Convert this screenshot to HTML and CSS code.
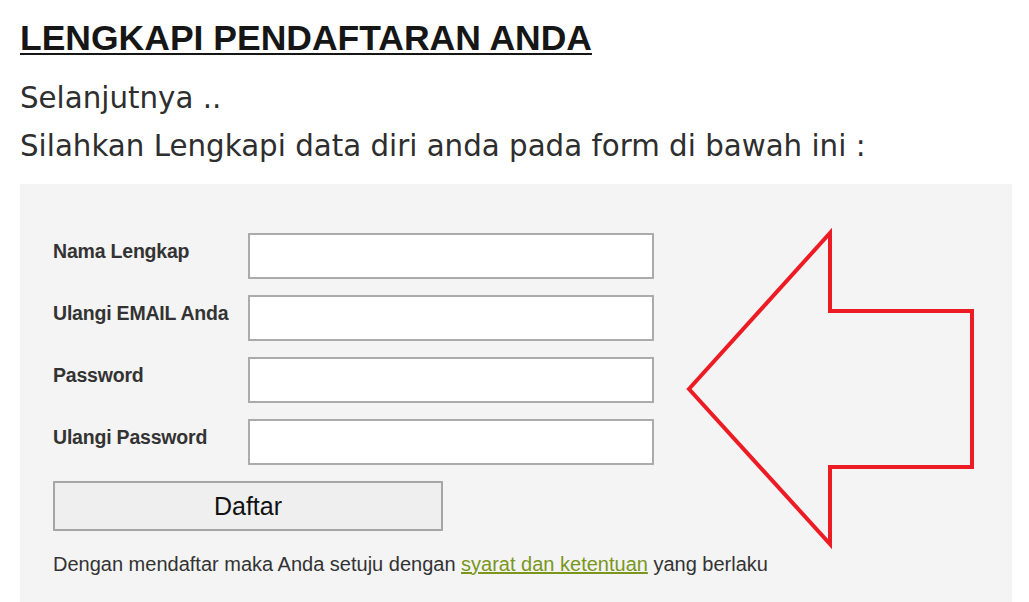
FILE: index.html
```html
<!DOCTYPE html>
<html lang="id">
<head>
<meta charset="utf-8">
<title>Lengkapi Pendaftaran Anda</title>
<link rel="stylesheet" href="styles.css">
</head>
<body>
<div class="page">
  <h1 class="title">LENGKAPI PENDAFTARAN ANDA</h1>
  <p class="lead">Selanjutnya ..</p>
  <p class="lead">Silahkan Lengkapi data diri anda pada form di bawah ini :</p>
  <div class="panel">
    <form class="form">
      <label class="label" for="nama">Nama Lengkap</label>
      <input class="field" id="nama" type="text">
      <label class="label" for="email">Ulangi EMAIL Anda</label>
      <input class="field" id="email" type="text">
      <label class="label" for="pass">Password</label>
      <input class="field" id="pass" type="password">
      <label class="label" for="pass2">Ulangi Password</label>
      <input class="field" id="pass2" type="password">
      <button class="submit" type="button">Daftar</button>
    </form>
    <p class="terms">Dengan mendaftar maka Anda setuju dengan <a class="terms-link" href="#">syarat dan ketentuan</a> yang berlaku</p>
    <svg class="arrow" width="300" height="330" viewBox="0 0 300 330" aria-hidden="true">
      <polygon points="150,8 150,86 292,86 292,242 150,242 150,319 9,164" fill="none" stroke="#ed1c24" stroke-width="4" stroke-linejoin="miter"/>
    </svg>
  </div>
</div>
</body>
</html>
```

FILE: styles.css
```css
html, body {
  margin: 0;
  padding: 0;
  background: #ffffff;
  height: 100%;
  overflow: hidden;
}

.page {
  padding: 18px 17px 0 20px;
}

.title {
  margin: 0 0 16px;
  font-family: "Liberation Sans", Arial, sans-serif;
  font-weight: bold;
  font-size: 35.5px;
  line-height: 40px;
  color: #161616;
  text-decoration: underline;
  text-decoration-thickness: 2px;
  text-underline-offset: 3px;
}

.lead {
  margin: 0;
  font-family: "DejaVu Sans", Verdana, sans-serif;
  font-size: 29.3px;
  line-height: 48px;
  color: #2e2e2e;
}

.panel {
  position: relative;
  margin-top: 14px;
  background: #f4f4f4;
  height: 440px;
  padding: 49px 0 0 33px;
  box-sizing: border-box;
}

.form {
  display: grid;
  grid-template-columns: 195px 406px;
  row-gap: 16px;
  margin: 0;
}

.label {
  padding-top: 7px;
  font-family: "Liberation Sans", Arial, sans-serif;
  font-weight: bold;
  font-size: 19.5px;
  line-height: 22px;
  letter-spacing: -0.2px;
  color: #333333;
}

.field {
  box-sizing: border-box;
  height: 46px;
  width: 406px;
  margin: 0;
  border: 2px solid #ababab;
  background: #ffffff;
  padding: 0 8px;
  font-size: 18px;
}

.submit {
  grid-column: 1 / 3;
  box-sizing: border-box;
  width: 390px;
  height: 50px;
  margin: 0;
  border: 2px solid #a6a6a6;
  background: #efefef;
  font-family: "Liberation Sans", Arial, sans-serif;
  font-size: 25px;
  color: #111111;
}

.terms {
  margin: 21px 0 0;
  font-family: "Liberation Sans", Arial, sans-serif;
  font-size: 20px;
  line-height: 24px;
  color: #333333;
}

.terms-link {
  color: #7a961c;
  text-decoration: underline;
}

.arrow {
  position: absolute;
  left: 660px;
  top: 41px;
}
```
